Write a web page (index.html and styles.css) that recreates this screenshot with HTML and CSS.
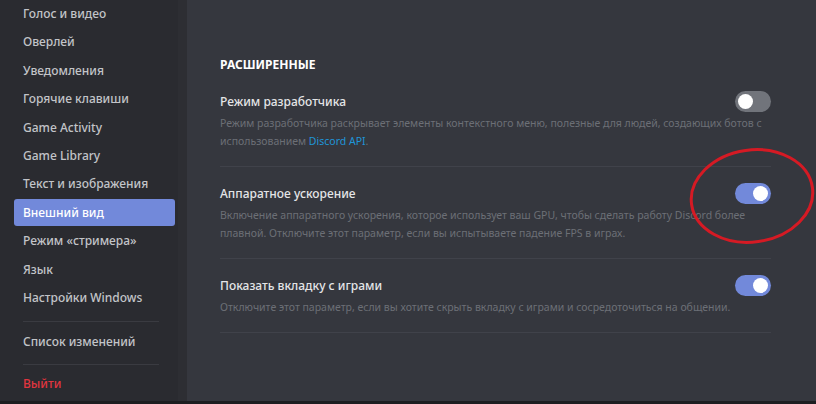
FILE: index.html
```html
<!DOCTYPE html>
<html lang="ru">
<head>
    <meta charset="UTF-8">
    <meta name="viewport" content="width=device-width, initial-scale=1.0">
    <title>Настройки - Внешний вид</title>
    <link rel="stylesheet" href="styles.css">
</head>
<body>
    <div class="app">
        <nav class="sidebar">
            <div class="nav-item">Голос и видео</div>
            <div class="nav-item">Оверлей</div>
            <div class="nav-item">Уведомления</div>
            <div class="nav-item">Горячие клавиши</div>
            <div class="nav-item">Game Activity</div>
            <div class="nav-item">Game Library</div>
            <div class="nav-item">Текст и изображения</div>
            <div class="nav-item active">Внешний вид</div>
            <div class="nav-item">Режим «стримера»</div>
            <div class="nav-item">Язык</div>
            <div class="nav-item">Настройки Windows</div>
            <div class="nav-sep"></div>
            <div class="nav-item">Список изменений</div>
            <div class="nav-sep last"></div>
            <div class="nav-item logout">Выйти</div>
        </nav>

        <main class="content">
            <h2 class="section-title">Расширенные</h2>

            <div class="setting">
                <div class="setting-head">
                    <span class="setting-name">Режим разработчика</span>
                    <span class="toggle"></span>
                </div>
                <p class="setting-desc">Режим разработчика раскрывает элементы контекстного меню, полезные для людей, создающих ботов с использованием <a href="#">Discord API</a>.</p>
            </div>

            <div class="setting">
                <div class="setting-head">
                    <span class="setting-name">Аппаратное ускорение</span>
                    <span class="toggle on"></span>
                </div>
                <p class="setting-desc">Включение аппаратного ускорения, которое использует ваш GPU, чтобы сделать работу Discord более плавной. Отключите этот параметр, если вы испытываете падение FPS в играх.</p>
            </div>

            <div class="setting">
                <div class="setting-head">
                    <span class="setting-name">Показать вкладку с играми</span>
                    <span class="toggle on"></span>
                </div>
                <p class="setting-desc">Отключите этот параметр, если вы хотите скрыть вкладку с играми и сосредоточиться на общении.</p>
            </div>

            <!-- red mark drawn over the screenshot -->
            <svg class="circle-mark" width="134" height="104" viewBox="0 0 134 104">
                <ellipse cx="67" cy="52" rx="61" ry="46" transform="rotate(-8 67 52)" fill="none" stroke="#d51a24" stroke-width="3"/>
            </svg>
        </main>
    </div>
</body>
</html>
```

FILE: styles.css
```css
body {
    margin: 0;
    background-color: #1e1f22;
    font-family: "Noto Sans", "Open Sans", sans-serif;
}
.app {
    display: flex;
    height: 401px;
    border-bottom: 3px solid #1d1e21;
}
.sidebar {
    width: 178px;
    background-color: #2a2b30;
    border-right: 9px solid #2d2e33;
}
.nav-item {
    height: 28.4px;
    line-height: 28.4px;
    margin-left: 14px;
    width: 161px;
    padding-left: 9px;
    box-sizing: border-box;
    font-size: 12px;
    font-weight: 500;
    color: #c2c4c8;
    border-radius: 3px;
    white-space: nowrap;
}
.nav-item.active {
    background-color: #7289da;
    color: #ffffff;
    height: 27px;
    line-height: 27px;
    margin-top: 0.7px;
    margin-bottom: 0.7px;
}
.nav-item.logout {
    color: #e0353f;
}
.nav-sep {
    height: 1px;
    margin: 9px 19px 6px 23px;
    background-color: #3a3b41;
}
.nav-sep.last {
    margin-top: 7px;
    margin-bottom: 5px;
}
.content {
    position: relative;
    flex: 1;
    background-color: #35373e;
    padding: 56px 45px 0 33px;
}
.section-title {
    margin: 0 0 17px;
    font-size: 12px;
    line-height: 18px;
    font-weight: 700;
    text-transform: uppercase;
    color: #ffffff;
}
.setting {
    padding-bottom: 16px;
    margin-bottom: 16px;
    border-bottom: 1px solid #40424a;
}
.setting-head {
    display: flex;
    justify-content: space-between;
    align-items: center;
    height: 20px;
}
.setting-name {
    font-size: 12px;
    font-weight: 500;
    color: #e4e5e7;
}
.setting-desc {
    margin: 3px 0 0;
    font-size: 10.5px;
    line-height: 18px;
    color: #6c6f76;
}
.setting-desc a {
    color: #1f95d8;
    text-decoration: none;
}
.toggle {
    position: relative;
    width: 36px;
    height: 21px;
    border-radius: 11px;
    background-color: #71747b;
}
.toggle::after {
    content: "";
    position: absolute;
    top: 3px;
    left: 3px;
    width: 15px;
    height: 15px;
    border-radius: 50%;
    background-color: #ffffff;
}
.toggle.on {
    background-color: #7289da;
}
.toggle.on::after {
    left: 18px;
}
.circle-mark {
    position: absolute;
    left: 498px;
    top: 144px;
}
```
